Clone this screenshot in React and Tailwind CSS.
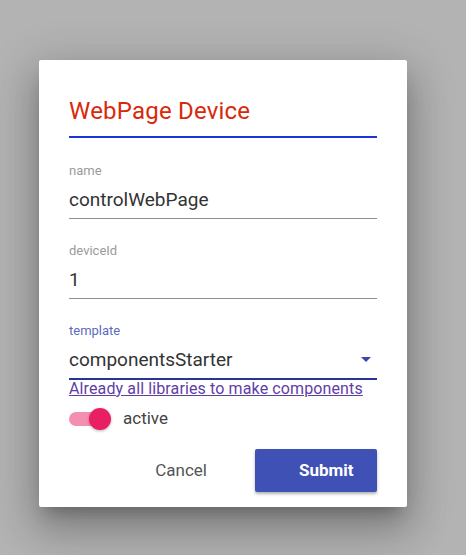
import React from "react";

const FIELDS = [
  { label: "name", value: "controlWebPage" },
  { label: "deviceId", value: "1" },
];

function Field({ label, value, first }) {
  return (
    <div className={first ? "mt-[25px]" : "mt-[24px]"}>
      <div className="h-[16px] text-[13px] leading-[16px] text-[#9a9a9a]">{label}</div>
      <div className="mt-[9px] h-[24px] text-[19px] leading-[24px] text-[#333333]">{value}</div>
      <div className="pb-[6px] border-b border-[#8f8f8f]" />
    </div>
  );
}

export default function App() {
  return (
    <div
      className="min-h-screen w-full bg-[#b3b3b3] pt-[60px] pl-[39px]"
      style={{ fontFamily: "Roboto, 'Noto Sans', sans-serif" }}
    >
      <div className="w-[368px] h-[447px] bg-white rounded-[2px] px-[30px] pt-[37px] shadow-[0_11px_15px_-7px_rgba(0,0,0,0.25),0_24px_38px_3px_rgba(0,0,0,0.18),0_9px_46px_8px_rgba(0,0,0,0.14)]">
        <div className="h-[28px] text-[24px] leading-[28px] tracking-[0.2px] text-[#d9290b]">WebPage Device</div>
        <div className="mt-[11px] border-b-2 border-[#1e33d6]" />

        {FIELDS.map((f, i) => (
          <Field key={f.label} label={f.label} value={f.value} first={i === 0} />
        ))}

        <div className="mt-[24px]">
          <div className="h-[16px] text-[13px] leading-[16px] text-[#5c6bc0]">template</div>
          <div className="mt-[9px] h-[24px] flex items-center justify-between text-[19px] leading-[24px] text-[#333333]">
            <span>componentsStarter</span>
            <svg width="10" height="5" viewBox="0 0 10 5" className="mr-[6px] mt-[-2px]">
              <path d="M0 0 L10 0 L5 5 Z" fill="#3949ab" />
            </svg>
          </div>
          <div className="pb-[6px] border-b-2 border-[#283593]" />
        </div>

        <a
          href="#components"
          className="block h-[18px] text-[16px] leading-[18px] tracking-[0.12px] text-[#5e3ea6] underline"
        >
          Already all libraries to make components
        </a>

        <div className="mt-[10px] h-[22px] flex items-center">
          <div className="relative w-[36px] h-[14px] rounded-full bg-[#f48fb1]">
            <div className="absolute left-[20px] top-[-4px] w-[22px] h-[22px] rounded-full bg-[#e91e63] shadow-[0_1px_3px_rgba(0,0,0,0.3)]" />
          </div>
          <span className="ml-[18px] text-[17px] text-[#444444]">active</span>
        </div>

        <div className="mt-[19px] flex items-center justify-end">
          <span className="mr-[48px] text-[17px] text-[#555555]">Cancel</span>
          <button className="w-[122px] h-[43px] rounded-[2px] bg-[#3f51b5] pl-[44px] text-left text-[17px] font-bold text-white shadow-[0_2px_3px_rgba(0,0,0,0.3)]">
            Submit
          </button>
        </div>
      </div>
    </div>
  );
}
